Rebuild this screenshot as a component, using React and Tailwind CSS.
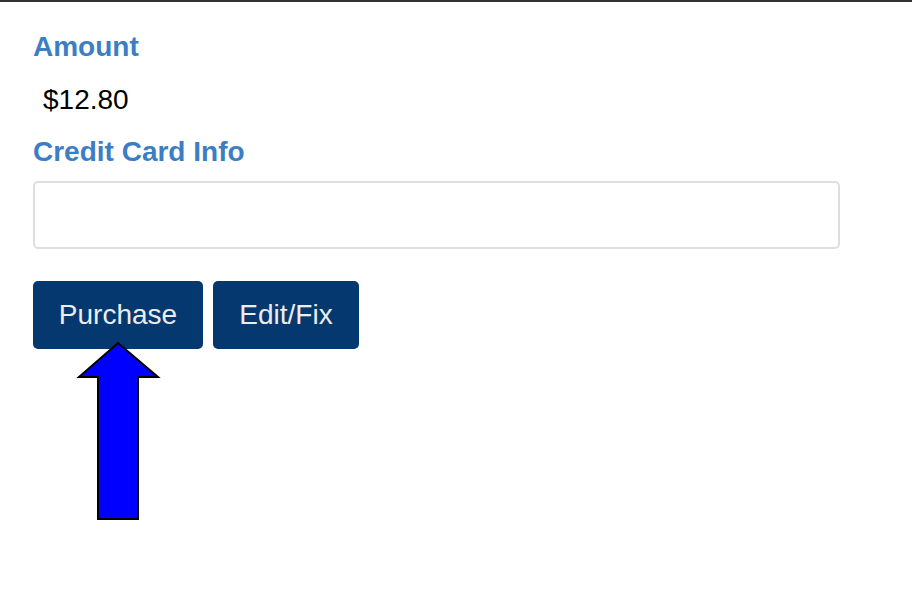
export default function App() {
  return (
    <div className="relative min-h-[594px] w-[912px] bg-white border-t-2 border-[#333]" style={{ fontFamily: '"Liberation Sans", Arial, sans-serif' }}>
      <div className="px-[33px] pt-[28px]">
        <div className="text-[28px] leading-[34px] font-bold text-[#3c7ec4]">Amount</div>
        <div className="mt-[19px] pl-[10px] text-[28px] leading-[34px] text-black">$12.80</div>
        <div className="mt-[18px] text-[28px] leading-[34px] font-bold text-[#3c7ec4]">Credit Card Info</div>
        <div className="mt-[12px] w-[807px] h-[68px] rounded-[5px] border-2 border-[#dedede] bg-white" />
        <div className="mt-[32px] flex gap-[10px]">
          <button className="h-[68px] w-[170px] rounded-[5px] bg-[#05386f] text-[28px] text-[#ececec]">Purchase</button>
          <button className="h-[68px] w-[146px] rounded-[5px] bg-[#05386f] text-[28px] text-[#ececec]">Edit/Fix</button>
        </div>
      </div>
      <svg className="absolute left-[76px] top-[338px]" width="86" height="184" viewBox="0 0 86 184">
        <polygon
          points="42,3 82,37 62,37 62,179 22,179 22,37 3,37"
          fill="#0000ff"
          stroke="#000"
          strokeWidth="2"
          strokeLinejoin="miter"
        />
      </svg>
    </div>
  );
}
